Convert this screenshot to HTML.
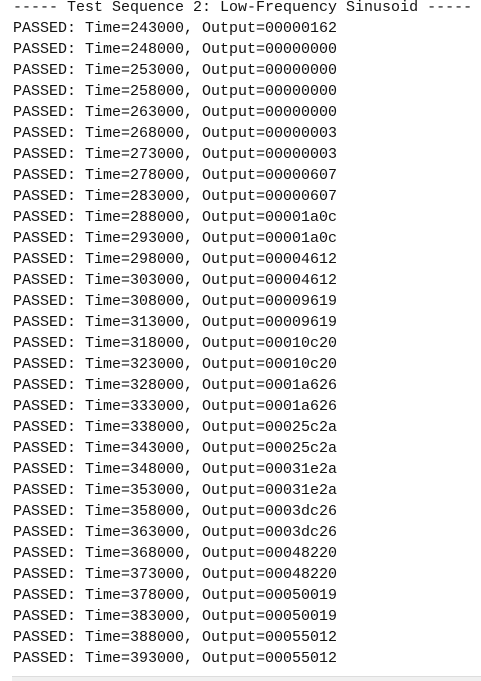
<!DOCTYPE html>
<html><head><meta charset="utf-8"><style>
html,body{margin:0;padding:0;background:#fff;width:481px;height:680px;overflow:hidden}
pre{margin:0;position:absolute;left:13px;top:-3px;font-family:"Liberation Mono",monospace;font-size:15px;line-height:21px;color:#111}
.sb{position:absolute;left:12px;top:676px;width:469px;height:4px;background:#f0f0f0;border-top:1px solid #ddd}
</style></head><body>
<pre>----- Test Sequence 2: Low-Frequency Sinusoid -----
PASSED: Time=243000, Output=00000162
PASSED: Time=248000, Output=00000000
PASSED: Time=253000, Output=00000000
PASSED: Time=258000, Output=00000000
PASSED: Time=263000, Output=00000000
PASSED: Time=268000, Output=00000003
PASSED: Time=273000, Output=00000003
PASSED: Time=278000, Output=00000607
PASSED: Time=283000, Output=00000607
PASSED: Time=288000, Output=00001a0c
PASSED: Time=293000, Output=00001a0c
PASSED: Time=298000, Output=00004612
PASSED: Time=303000, Output=00004612
PASSED: Time=308000, Output=00009619
PASSED: Time=313000, Output=00009619
PASSED: Time=318000, Output=00010c20
PASSED: Time=323000, Output=00010c20
PASSED: Time=328000, Output=0001a626
PASSED: Time=333000, Output=0001a626
PASSED: Time=338000, Output=00025c2a
PASSED: Time=343000, Output=00025c2a
PASSED: Time=348000, Output=00031e2a
PASSED: Time=353000, Output=00031e2a
PASSED: Time=358000, Output=0003dc26
PASSED: Time=363000, Output=0003dc26
PASSED: Time=368000, Output=00048220
PASSED: Time=373000, Output=00048220
PASSED: Time=378000, Output=00050019
PASSED: Time=383000, Output=00050019
PASSED: Time=388000, Output=00055012
PASSED: Time=393000, Output=00055012</pre>
<div class="sb"></div>
</body></html>
